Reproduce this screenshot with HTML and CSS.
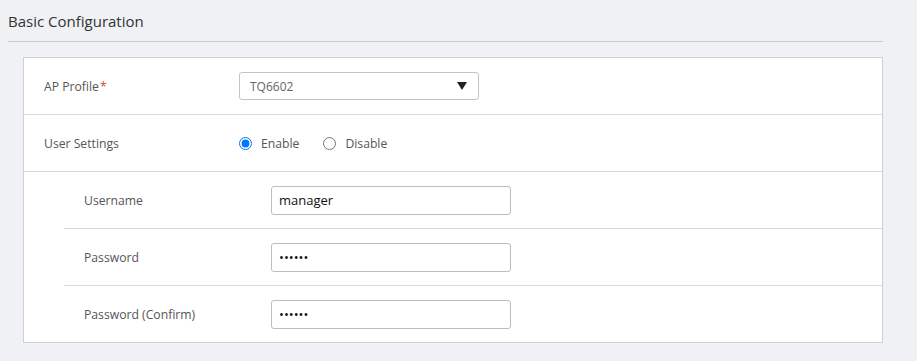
FILE: index.html
```html
<!DOCTYPE html>
<html lang="en">
<head>
    <meta charset="UTF-8">
    <meta name="viewport" content="width=device-width, initial-scale=1.0">
    <title>Basic Configuration</title>
    <link rel="stylesheet" href="styles.css">
</head>
<body>
    <h2 class="section-title">Basic Configuration</h2>

    <div class="panel">
        <div class="row">
            <label class="row-label">AP Profile<span class="required">*</span></label>
            <div class="select-box">
                <span>TQ6602</span>
                <span class="caret"></span>
            </div>
        </div>

        <div class="row">
            <label class="row-label">User Settings</label>
            <div class="radio-group">
                <label class="radio"><input type="radio" name="user-settings" checked> Enable</label>
                <label class="radio"><input type="radio" name="user-settings"> Disable</label>
            </div>
        </div>

        <div class="sub-rows">
            <div class="row sub">
                <label class="row-label">Username</label>
                <input class="text-input" type="text" value="manager">
            </div>
            <div class="row sub">
                <label class="row-label">Password</label>
                <input class="text-input" type="password" value="secret">
            </div>
            <div class="row sub">
                <label class="row-label">Password (Confirm)</label>
                <input class="text-input" type="password" value="secret">
            </div>
        </div>
    </div>
</body>
</html>
```

FILE: styles.css
```css
body {
    font-family: "Open Sans", "Noto Sans", Arial, sans-serif;
    margin: 0;
    padding: 0 34px 0 8px;
    background-color: #f0f1f5;
    color: #333;
}
.section-title {
    font-size: 15px;
    font-weight: normal;
    color: #333;
    margin: 0;
    padding: 11px 0 9px;
    line-height: 21px;
    border-bottom: 1px solid #c8c9cc;
}
.panel {
    margin: 15px 0 0 15px;
    background: white;
    border: 1px solid #cfd0d3;
}
.row {
    display: flex;
    align-items: center;
    height: 56px;
    padding-left: 20px;
    border-bottom: 1px solid #d9d9dc;
}
.row-label {
    width: 195px;
    font-size: 12.2px;
    color: #555;
    padding-top: 1px;
}
.required { color: #e0452b; margin-left: 1px; }
.select-box {
    box-sizing: border-box;
    width: 240px;
    height: 28px;
    border: 1px solid #c4c4c6;
    border-radius: 3px;
    display: flex;
    align-items: center;
    justify-content: space-between;
    padding: 0 11px 0 10px;
    font-size: 12px;
    color: #666;
}
.caret {
    width: 0;
    height: 0;
    border-left: 5px solid transparent;
    border-right: 5px solid transparent;
    border-top: 8px solid #222;
}
.radio-group { display: flex; gap: 24px; }
.radio {
    display: flex;
    align-items: center;
    font-size: 12.2px;
    color: #555;
}
.radio input {
    margin: 0 9px 0 0;
    width: 13px;
    height: 13px;
}
.sub-rows { margin-left: 40px; }
.sub-rows .row:last-child { border-bottom: none; }
.row.sub .row-label { width: 187px; }
.text-input {
    box-sizing: border-box;
    width: 240px;
    height: 29px;
    border: 1px solid #bdbdc0;
    border-radius: 3px;
    padding: 0 7px;
    font-family: inherit;
    font-size: 13px;
    color: #111;
}
```
